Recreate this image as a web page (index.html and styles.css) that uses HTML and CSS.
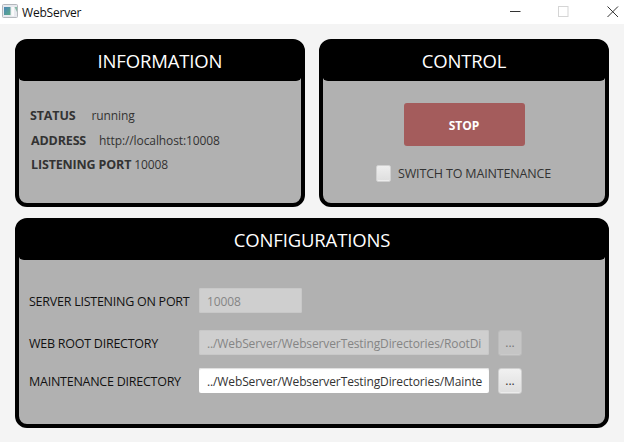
FILE: index.html
```html
<!DOCTYPE html>
<html lang="en">
<head>
<meta charset="utf-8">
<title>WebServer</title>
<link rel="stylesheet" href="styles.css">
</head>
<body>
<header class="titlebar">
  <svg class="app-icon" width="16" height="14" viewBox="0 0 16 14">
    <defs><linearGradient id="screen" x1="0" y1="0" x2="1" y2="1"><stop offset="0" stop-color="#4b86b8"/><stop offset="1" stop-color="#5cab86"/></linearGradient></defs>
    <rect x=".5" y=".5" width="15" height="13" rx="1" fill="#e7e9ee" stroke="#b4b8bd"/>
    <rect x="2" y="3" width="6.500" height="8" fill="url(#screen)"/>
    <rect x="9.500" y="3" width="2.500" height="9" fill="#fafafa"/>
    <path d="M12.500 3H15V8Z" fill="#86bba7"/>
  </svg>
  <span class="window-title">WebServer</span>
  <svg class="window-controls" width="110" height="13" viewBox="0 0 110 13">
    <path d="M0 6.500H10.500" stroke="#333" fill="none"/>
    <rect x="48.500" y="1.500" width="9.500" height="10" stroke="#d5d5d5" fill="none"/>
    <path d="M97.500 1.500L108 12M108 1.500L97.500 12" stroke="#333" fill="none"/>
  </svg>
</header>
<main class="dashboard">
  <section class="panel">
    <h2 class="panel-title">INFORMATION</h2>
    <dl class="facts">
      <div class="fact status"><dt>STATUS</dt><dd>running</dd></div>
      <div class="fact address"><dt>ADDRESS</dt><dd>http://localhost:10008</dd></div>
      <div class="fact port"><dt>LISTENING PORT</dt><dd>10008</dd></div>
    </dl>
  </section>
  <section class="panel">
    <h2 class="panel-title">CONTROL</h2>
    <div class="control">
      <button class="stop">STOP</button>
      <label class="switch"><span class="checkbox"></span><span class="switch-label">SWITCH TO MAINTENANCE</span></label>
    </div>
  </section>
  <section class="panel wide">
    <h2 class="panel-title">CONFIGURATIONS</h2>
    <div class="settings">
      <div class="setting"><span class="label">SERVER LISTENING ON PORT</span><div class="field short disabled">10008</div></div>
      <div class="setting"><span class="label">WEB ROOT DIRECTORY</span><div class="field disabled">../WebServer/WebserverTestingDirectories/RootDi</div><button class="browse disabled">...</button></div>
      <div class="setting"><span class="label">MAINTENANCE DIRECTORY</span><div class="field">../WebServer/WebserverTestingDirectories/Mainte</div><button class="browse">...</button></div>
    </div>
  </section>
</main>
</body>
</html>
```

FILE: styles.css
```css
* { box-sizing: border-box; }
body { margin: 0; width: 624px; height: 442px; overflow: hidden; background: #f4f4f4; font: 12px/18px "Open Sans", "Noto Sans", sans-serif; color: #333; }
h2, dl, dd { margin: 0; }
button { font: inherit; border: 0; padding: 0; }
.titlebar { display: flex; height: 24px; background: #fff; padding: 4px 4px 0 2px; color: #111; }
.window-title { margin-left: 4px; line-height: 17px; letter-spacing: -.2px; }
.window-controls { margin: 1px 0 0 auto; }
.dashboard { display: grid; grid-template-columns: 290px 290px; grid-template-rows: 168px 210px; gap: 11px 14px; padding: 15px; }
.panel { background: linear-gradient(#000 30px, #b1b1b1 30px) border-box; border: 4px solid #000; border-radius: 12px; }
.wide { grid-column: span 2; }
.panel-title { height: 38px; margin: 0 -1px; background: #000; border-radius: 0 0 6px 6px; color: #fff; text-align: center; font-size: 18.5px; letter-spacing: -.15px; font-weight: 400; line-height: 35px; }
.facts { padding: 26px 0 0 11px; }
.fact { display: flex; height: 25px; }
.fact dt { font-weight: 700; font-size: 12.5px; letter-spacing: -.15px; }
.fact dd { letter-spacing: -.1px; }
.status dd { margin-left: 16px; }
.address { padding-left: 1px; }
.address dd { margin-left: 13px; }
.port { padding-left: 1px; margin-top: -1px; }
.port dd { margin-left: 3px; }
.control { display: flex; flex-direction: column; align-items: center; padding-top: 22px; }
.stop { width: 121px; height: 43px; padding-top: 2px; border-radius: 3px; background: #a45c5c; color: #fff; font-weight: 700; }
.switch { display: flex; align-self: flex-start; margin: 18px 0 0 53px; }
.switch-label { padding-top: 1px; letter-spacing: -.16px; font-size: 12.5px; }
.checkbox { width: 15px; height: 17px; margin: 1px 7px 0 0; border: 1px solid #d0d0d0; border-radius: 2px; background: linear-gradient(#eee, #dedede); box-shadow: inset 0 -1px #ededed; }
.settings { padding: 28px 0 0 10px; }
.setting { display: flex; height: 39px; }
.setting:first-child { height: 42px; }
.setting:nth-child(2) { height: 38px; }
.label { width: 170px; line-height: 27px; color: #111; white-space: nowrap; font-size: 12.5px; letter-spacing: -.25px; }
.field { width: 290px; height: 25px; padding: 0 0 0 8px; border-radius: 2px; background: #fff; box-shadow: inset 0 1px 1px #ddd; line-height: 27px; white-space: nowrap; letter-spacing: -.12px; }
.short { width: 103px; }
.field.disabled { background: #cfcfcf; color: #858585; box-shadow: inset 0 0 0 1px #c8c8c8; }
.browse { width: 24px; height: 26px; margin-left: 9px; border: 1px solid #d0d0d0; border-radius: 3px; background: linear-gradient(#f1f1f1, #dedede); box-shadow: inset 0 -1px #ececec; color: #333; line-height: 24px; }
.browse.disabled { border-color: #bcbcbc; background: #c5c5c5; box-shadow: inset 0 -1px #cacaca; color: #777; }
```
